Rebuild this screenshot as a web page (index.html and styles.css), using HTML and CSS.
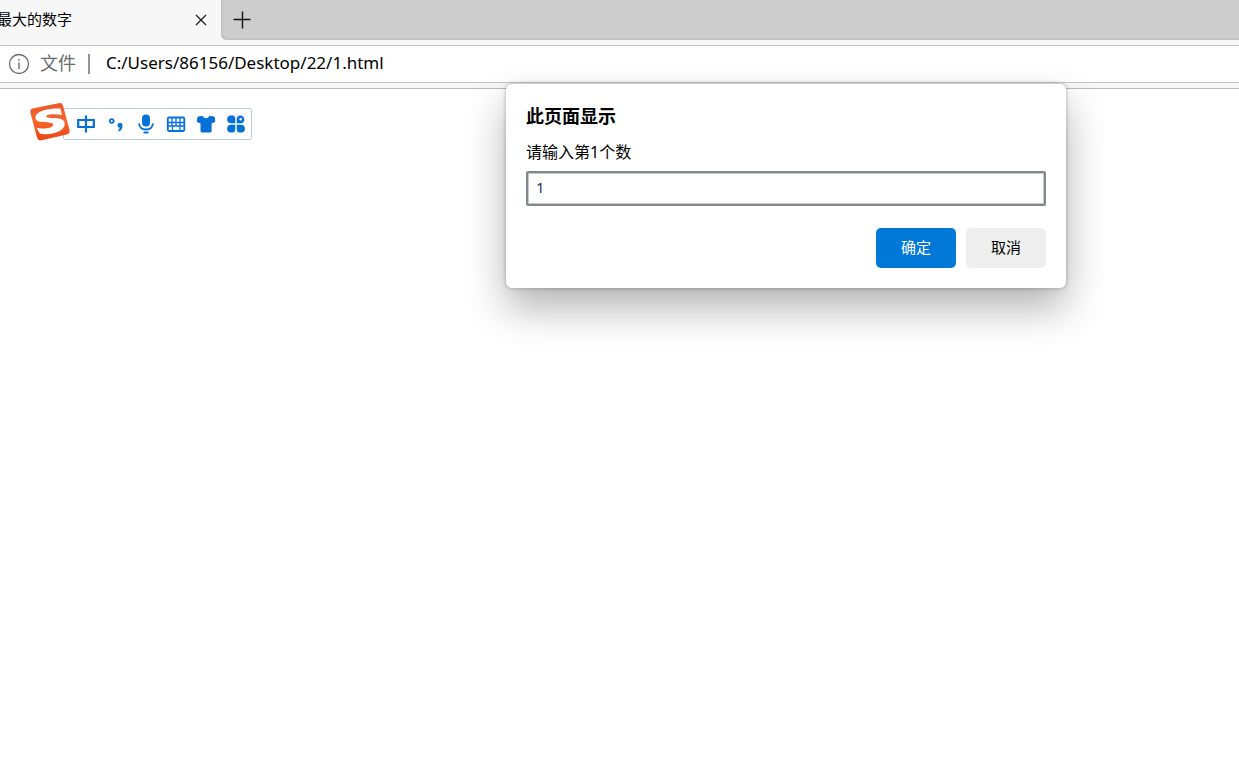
FILE: index.html
```html
<!DOCTYPE html>
<html lang="zh-CN">
<head>
<meta charset="utf-8">
<title>最大的数字</title>
<link rel="stylesheet" href="styles.css">
</head>
<body>
<div class="browser">
  <header class="tabstrip">
    <div class="tab">
      <span class="tab-title">最大的数字</span>
      <button class="icon-button" aria-label="关闭标签页">
        <svg width="12" height="12" viewBox="0 0 12 12"><path d="M1 1 11 11M11 1 1 11" fill="none" stroke="#222" stroke-width="1.4"/></svg>
      </button>
    </div>
    <div class="strip-rest">
      <button class="icon-button" aria-label="新建标签页">
        <svg width="18" height="18" viewBox="0 0 18 18"><path d="M9.500 .5V17.500M.5 8.500H17.500" fill="none" stroke="#111" stroke-width="1.4"/></svg>
      </button>
    </div>
  </header>
  <div class="toolbar">
    <div class="address">
      <svg class="info" width="22" height="22" viewBox="0 0 22 22"><circle cx="11" cy="11" r="9.500" fill="none" stroke="#6b6b6b" stroke-width="1.300"/><path d="M11 9.500V16" stroke="#6b6b6b" stroke-width="1.400"/><circle cx="11" cy="6.800" r=".9" fill="#6b6b6b"/></svg>
      <label class="scheme" for="url">文件</label>
      <span class="divider"></span>
      <input class="url" id="url" type="text" value="C:/Users/86156/Desktop/22/1.html">
    </div>
  </div>
  <main class="page"></main>

  <div class="ime">
    <svg class="ime-logo" width="42" height="40" viewBox="0 0 42 40">
      <defs><linearGradient id="flame" x1="0" y1="0" x2="0" y2="1"><stop offset="0" stop-color="#e95a2a"/><stop offset=".5" stop-color="#f9642a"/><stop offset="1" stop-color="#ea4513"/></linearGradient></defs>
      <path d="M4.500 6.200 29.500 1.200Q33.200.5 34 3.500L40.500 28Q41.300 31.500 37.800 32.500L12.500 38.200Q9 39 8 35.500L1.400 10.500Q.6 7 4.500 6.200Z" fill="url(#flame)"/>
      <path d="M31.500 6.500C25 5.900 5.500 7.500 6.500 16.200C7.300 22.500 23.500 18.300 24.300 22.400C24.800 25.800 14.500 27.500 7.500 25.700L11 31.700C19 33.500 36.500 30.500 35.700 21.200C35 13.500 17.800 17.800 17.300 14.600C17 12 26 11.900 33 13Z" fill="#fff"/>
    </svg>
    <div class="ime-bar">
      <button class="icon-button" aria-label="中文"><svg width="20" height="20" viewBox="0 0 20 20"><path d="M2.200 6H17.800V13H2.200ZM10 1.500V18.500" fill="none" stroke="#0571d8" stroke-width="2.200"/></svg></button>
      <button class="icon-button" aria-label="标点"><svg width="20" height="20" viewBox="0 0 20 20"><circle cx="5.700" cy="7" r="1.900" fill="none" stroke="#0571d8" stroke-width="1.800"/><path d="M14 9a2.300 2.300 0 0 1 2.500 2.500Q16.500 15.500 13 17.500L12 16.300Q13.600 15 13.700 13.800A2.400 2.400 0 0 1 14 9Z" fill="#0571d8"/></svg></button>
      <button class="icon-button" aria-label="语音"><svg width="20" height="20" viewBox="0 0 20 20"><rect x="6" y=".5" width="8" height="12" rx="4" fill="#0571d8"/><path d="M3 9.500C3.500 13.500 6 15.500 10 15.500S16.500 13.500 17 9.500M7.500 18.500H12.500" fill="none" stroke="#0571d8" stroke-width="1.900"/></svg></button>
      <button class="icon-button" aria-label="软键盘"><svg width="20" height="20" viewBox="0 0 20 20"><rect x="1.800" y="3.500" width="16.500" height="13.500" rx="1.200" fill="none" stroke="#0571d8" stroke-width="1.800"/><path d="M2 8.500H18M2 12H18M6 4V12M10 4V12M14 4V12M6.500 12V17M14 12V17" fill="none" stroke="#0571d8" stroke-width="1.300"/></svg></button>
      <button class="icon-button" aria-label="皮肤"><svg width="20" height="20" viewBox="0 0 20 20"><path d="M1.500 3Q4 1.700 6.500 2Q10 6.500 13.500 2Q16.500 1.700 18.700 3L19.300 7.500Q17.500 9.300 15.600 9.200V17Q15.600 18.500 14 18.500H6Q4.500 18.500 4.500 17V9.200Q2.500 9.300.7 7.500Z" fill="#0571d8"/></svg></button>
      <button class="icon-button toolbox" aria-label="工具箱"><svg width="20" height="20" viewBox="0 0 20 20"><path d="M5 1.500H6.500Q9.300 1.500 9.300 5V9.200H5A3.800 3.800 0 0 1 5 1.500ZM5 10.800H9.300V15Q9.300 18.500 6.500 18.500H5A3.800 3.800 0 0 1 5 10.800ZM10.800 10.800H15A3.800 3.800 0 0 1 15 18.500H14Q10.800 18.500 10.800 15Z" fill="#0571d8"/><path d="M11.700 8.300V5Q11.700 2.500 14.500 2.500A2.900 2.900 0 0 1 14.500 8.300Z" fill="#0571d8" stroke="#0571d8" stroke-width="1.800"/><circle cx="14.700" cy="5.200" r="1.300" fill="#fff"/></svg></button>
    </div>
  </div>

  <form class="dialog" role="dialog" aria-labelledby="dialog-title">
    <h1 class="dialog-title" id="dialog-title">此页面显示</h1>
    <label class="dialog-label" for="answer">请输入第1个数</label>
    <input class="dialog-input" id="answer" type="text" value="1">
    <div class="dialog-actions">
      <button class="button primary" type="button">确定</button>
      <button class="button" type="button">取消</button>
    </div>
  </form>
</div>
</body>
</html>
```
FILE: styles.css
```css
* { box-sizing: border-box; }

body {
  margin: 0;
  background: #fff;
  color: #000;
  font-family: "Noto Sans", "Noto Sans CJK SC", sans-serif;
}

button, input { font: inherit; color: inherit; }

svg { display: block; }

.browser {
  position: relative;
  display: flex;
  flex-direction: column;
  min-height: 100vh;
  overflow: hidden;
}

.icon-button {
  display: flex;
  padding: 0;
  border: 0;
  background: none;
}

.tabstrip {
  display: flex;
  height: 40px;
  background: #f7f7f7;
}

.tab {
  display: flex;
  align-items: center;
  justify-content: space-between;
  width: 221px;
  padding-right: 14px;
}

.tab-title {
  margin-left: -3px;
  padding-bottom: 2px;
  font-size: 15px;
  line-height: 20px;
}

.strip-rest {
  display: flex;
  flex: 1;
  align-items: center;
  padding-left: 12px;
  border-bottom-left-radius: 6px;
  background: #cdcdcd;
  box-shadow: inset 1px -1px 2px #bbb;
}

.toolbar {
  padding: 5px 0;
  border-bottom: 1px solid #bababa;
  background: #f7f7f7;
}

.address {
  display: flex;
  align-items: center;
  height: 38px;
  margin: 0 -8px;
  padding-left: 15px;
  border: 1px solid #c6c6c6;
  border-radius: 6px;
  background: #fff;
}

.scheme {
  margin-left: 10px;
  padding-bottom: 2px;
  color: #6b6b6b;
  font-size: 18px;
  line-height: 24px;
}

.divider {
  width: 2px;
  height: 20px;
  margin: 0 16px 0 12px;
  background: #949494;
}

.url {
  flex: 1;
  padding: 0 0 2px;
  border: 0;
  outline: 0;
  background: none;
  font-size: 17px;
  line-height: 24px;
}

.page { flex: 1; }

.ime {
  position: absolute;
  top: 102px;
  left: 29px;
  display: flex;
  align-items: center;
}

.ime-logo { z-index: 1; }

.ime-bar {
  display: flex;
  gap: 10px;
  margin: 4px 0 0 -8px;
  padding: 5px 5px 5px 12px;
  border: 1px solid #b9cde4;
  border-radius: 2px;
  background: #fff;
}

.toolbox {
  background: radial-gradient(circle at 50% 0, #f6e6ff, transparent 65%), radial-gradient(circle at 60% 100%, #e3ffdc, transparent 65%);
}

.dialog {
  position: absolute;
  top: 84px;
  left: 506px;
  display: flex;
  flex-direction: column;
  width: 560px;
  padding: 20px;
  border-radius: 6px;
  background: #fff;
  box-shadow: 0 0 4px rgba(0, 0, 0, .3), 0 20px 40px rgba(0, 0, 0, .3);
}

.dialog-title {
  margin: 0;
  font-size: 18px;
  font-weight: 700;
  line-height: 24px;
}

.dialog-label {
  margin: 12px 0 7px;
  font-size: 16px;
  line-height: 24px;
}

.dialog-input {
  height: 35px;
  padding: 0 8px 4px;
  border: 2px solid #82878e;
  border-radius: 2px;
  outline: 0;
  background: #fff;
  box-shadow: inset 0 0 0 1px #c4c8cd;
  color: #1a3355;
  font-size: 15px;
}

.dialog-actions {
  display: flex;
  justify-content: flex-end;
  gap: 10px;
  margin-top: 22px;
}

.button {
  width: 80px;
  height: 40px;
  padding: 0 0 4px;
  border: 0;
  border-radius: 5px;
  background: #efefef;
  font-size: 15px;
}

.primary {
  background: #0078d7;
  color: #fff;
}
```
